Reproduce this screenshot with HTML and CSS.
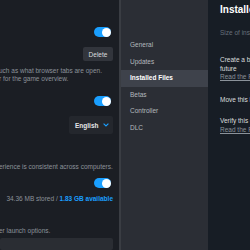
FILE: index.html
```html
<!DOCTYPE html>
<html lang="en">
<head>
    <meta charset="UTF-8">
    <meta name="viewport" content="width=device-width, initial-scale=1.0">
    <title>Properties - Installed Files</title>
    <link rel="stylesheet" href="styles.css">
</head>
<body>
    <div class="dialog">
        <div class="settings-pane">
            <div class="row row-toggle-1">
                <span class="toggle"><span class="knob"></span></span>
            </div>
            <div class="row row-delete">
                <button class="btn">Delete</button>
            </div>
            <p class="desc desc-tabs">uch as what browser tabs are open.<br>r for the game overview.</p>
            <div class="row row-toggle-2">
                <span class="toggle"><span class="knob"></span></span>
            </div>
            <div class="row row-lang">
                <div class="dropdown">
                    <span>English</span>
                    <svg class="chevron" width="6" height="4" viewBox="0 0 6 4"><path d="M0.6 0.6 L3 3 L5.4 0.6" fill="none" stroke="#1a9fff" stroke-width="1.1"/></svg>
                </div>
            </div>
            <p class="desc desc-cloud">erience is consistent across computers.</p>
            <div class="row row-toggle-3">
                <span class="toggle"><span class="knob"></span></span>
            </div>
            <div class="storage"><span>34.36 MB stored / <span class="available">1.83 GB available</span></span></div>
            <p class="desc desc-launch">er launch options.</p>
            <div class="launch-input"></div>
        </div>

        <div class="scrollbar"></div>

        <nav class="sidebar">
            <div class="nav-item">General</div>
            <div class="nav-item">Updates</div>
            <div class="nav-item active">Installed Files</div>
            <div class="nav-item">Betas</div>
            <div class="nav-item">Controller</div>
            <div class="nav-item">DLC</div>
        </nav>

        <main class="files-pane">
            <h1>Installed Files</h1>
            <p class="size">Size of installation:</p>
            <div class="section">
                <p class="label">Create a backup of the installed files to restore in the<br>future</p>
                <a class="link">Read the FAQ</a>
            </div>
            <p class="label move">Move this install folder</p>
            <div class="section verify">
                <p class="label">Verify this game's files</p>
                <a class="link">Read the FAQ</a>
            </div>
        </main>
    </div>
</body>
</html>
```

FILE: styles.css
```css
* {
    box-sizing: border-box;
}

body {
    margin: 0;
    width: 250px;
    height: 250px;
    overflow: hidden;
    font-family: "Liberation Sans", Arial, sans-serif;
    background: #1b1e24;
}

p {
    margin: 0;
}

.dialog {
    display: flex;
    height: 250px;
}

/* left settings column (scrolled, clipped on the left) */
.settings-pane {
    width: 119px;
    flex-shrink: 0;
    display: flex;
    flex-direction: column;
    background: #1b1e24;
    overflow: hidden;
    white-space: nowrap;
}

.row {
    display: flex;
    justify-content: flex-end;
    padding-right: 6px;
}

.row-toggle-1 { margin-top: 27px; padding-right: 8px; }
.row-delete { margin-top: 10px; }
.row-toggle-2 { margin-top: 13px; padding-right: 8px; }
.row-lang { margin-top: 10px; }
.row-toggle-3 { margin-top: 7px; padding-right: 8px; }

.toggle {
    position: relative;
    width: 17px;
    height: 10px;
    border-radius: 5px;
    background: #1a9fff;
}

.knob {
    position: absolute;
    top: 0.5px;
    right: 0.5px;
    width: 9px;
    height: 9px;
    border-radius: 50%;
    background: #fff;
}

.btn {
    width: 30px;
    height: 14px;
    padding: 0;
    border: none;
    border-radius: 2px;
    background: #32353c;
    color: #dcdedf;
    font-family: inherit;
    font-size: 6.5px;
}

.dropdown {
    width: 44px;
    height: 18px;
    display: flex;
    align-items: center;
    gap: 5px;
    padding-left: 6px;
    border-radius: 2px;
    background: #24272d;
    color: #e4e6e8;
    font-size: 6.5px;
    font-weight: bold;
}

.desc {
    color: #8b929a;
    font-size: 6.5px;
    line-height: 8px;
    margin-left: -1px;
}

.desc-tabs { margin-top: 6px; }
.desc-cloud { margin-top: 29px; }
.desc-launch { margin-top: 24px; }

.storage {
    display: flex;
    justify-content: flex-end;
    margin-top: 7px;
    padding-right: 6px;
    color: #8b929a;
    font-size: 6.5px;
    line-height: 8px;
}

.available {
    color: #1a9fff;
    font-weight: bold;
}

.launch-input {
    margin-top: 3px;
    margin-right: 6px;
    height: 20px;
    border-radius: 2px;
    background: #2a2d33;
}

.scrollbar {
    width: 2px;
    flex-shrink: 0;
    background: #3a3d43;
}

/* tab list */
.sidebar {
    width: 87px;
    flex-shrink: 0;
    padding-top: 37px;
    background: #2b2e35;
}

.nav-item {
    height: 16.5px;
    line-height: 16.5px;
    padding-left: 9px;
    color: #b5b9bd;
    font-size: 6.5px;
}

.nav-item.active {
    background: #3e424b;
    color: #fff;
    font-weight: bold;
}

/* right content */
.files-pane {
    flex: 1;
    padding: 4px 0 0 12px;
    background: #171d25;
    white-space: nowrap;
    overflow: hidden;
}

.files-pane h1 {
    margin: 0;
    color: #fff;
    font-size: 10px;
    line-height: 12px;
}

.size {
    margin-top: 13px;
    color: #67707b;
    font-size: 6.5px;
    line-height: 8px;
}

.section {
    margin-top: 19px;
}

.label {
    color: #dcdedf;
    font-size: 6.5px;
    line-height: 8.5px;
}

.link {
    display: block;
    color: #8b929a;
    font-size: 6.5px;
    line-height: 8.5px;
    text-decoration: underline;
}

.move {
    margin-top: 14px;
}

.verify {
    margin-top: 13px;
}
```
